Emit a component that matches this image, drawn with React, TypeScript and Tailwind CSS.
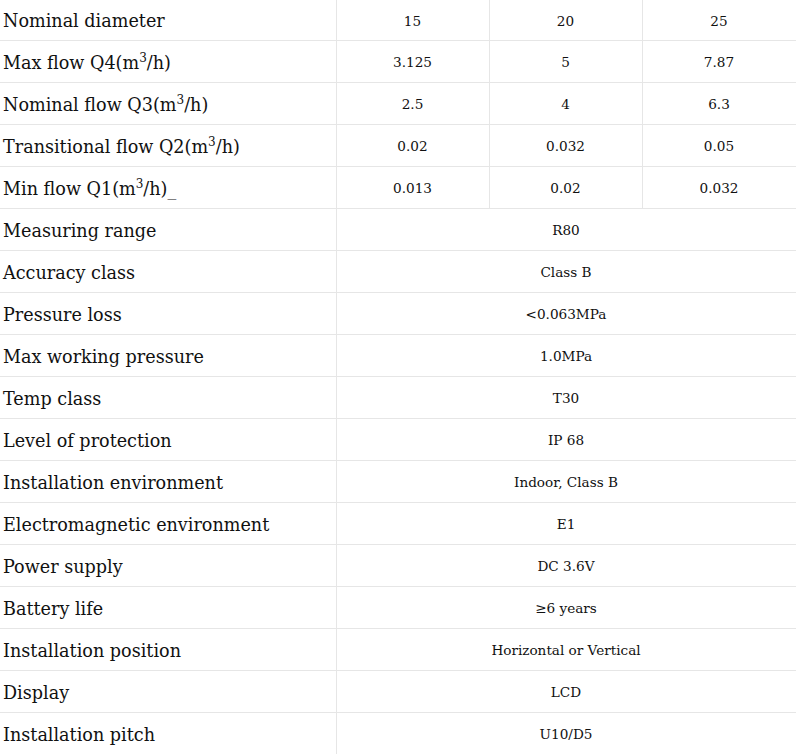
import React from "react";

type Row = { label: React.ReactNode; values: string[] };

const M3 = (
  <>
    m<sup className="text-[12px] -top-[0.6em]">3</sup>
  </>
);

const rows: Row[] = [
  { label: "Nominal diameter", values: ["15", "20", "25"] },
  { label: <>Max flow Q4({M3}/h)</>, values: ["3.125", "5", "7.87"] },
  { label: <>Nominal flow Q3({M3}/h)</>, values: ["2.5", "4", "6.3"] },
  { label: <>Transitional flow Q2({M3}/h)</>, values: ["0.02", "0.032", "0.05"] },
  { label: <>Min flow Q1({M3}/h)_</>, values: ["0.013", "0.02", "0.032"] },
  { label: "Measuring range", values: ["R80"] },
  { label: "Accuracy class", values: ["Class B"] },
  { label: "Pressure loss", values: ["<0.063MPa"] },
  { label: "Max working pressure", values: ["1.0MPa"] },
  { label: "Temp class", values: ["T30"] },
  { label: "Level of protection", values: ["IP 68"] },
  { label: "Installation environment", values: ["Indoor, Class B"] },
  { label: "Electromagnetic environment", values: ["E1"] },
  { label: "Power supply", values: ["DC 3.6V"] },
  { label: "Battery life", values: ["≥6 years"] },
  { label: "Installation position", values: ["Horizontal or Vertical"] },
  { label: "Display", values: ["LCD"] },
  { label: "Installation pitch", values: ["U10/D5"] },
];

export default function App() {
  return (
    <div className="bg-white w-[796px] h-[754px] overflow-hidden font-['DejaVu_Serif',serif] text-[#111]">
      <table className="w-[796px] border-collapse table-fixed">
        <colgroup>
          <col className="w-[336px]" />
          <col className="w-[153px]" />
          <col className="w-[153px]" />
          <col className="w-[154px]" />
        </colgroup>
        <tbody>
          {rows.map((row, i) => (
            <tr key={i} className={i === 0 ? "h-[40px]" : "h-[42px]"}>
              <td
                className={`border border-[#e6e6e6] border-l-0 pl-[3px] pt-[5px] text-[17.6px] leading-none ${
                  i === 0 ? "border-t-0" : ""
                }`}
              >
                {row.label}
              </td>
              {row.values.map((v, j) => (
                <td
                  key={j}
                  colSpan={row.values.length === 1 ? 3 : 1}
                  className={`border border-[#e6e6e6] pt-[4px] text-center text-[13.6px] leading-none ${
                    i === 0 ? "border-t-0" : ""
                  }`}
                >
                  {v}
                </td>
              ))}
            </tr>
          ))}
        </tbody>
      </table>
    </div>
  );
}
